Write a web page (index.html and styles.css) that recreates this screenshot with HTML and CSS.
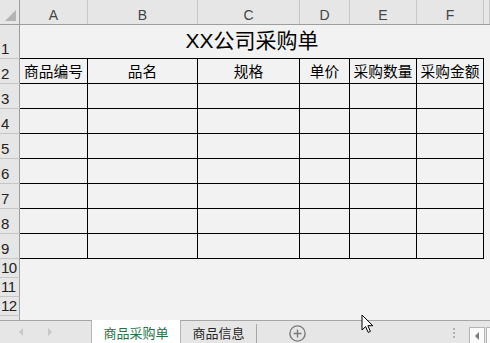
FILE: index.html
```html
<!DOCTYPE html>
<html lang="zh-CN">
<head>
  <meta charset="UTF-8" />
  <title>XX公司采购单</title>
  <link rel="stylesheet" href="styles.css">
</head>
<body>
  <div class="app">
    <div class="grid">
      <div class="row hdr">
        <div class="corner"><span class="tri"></span></div>
        <div class="col">A</div>
        <div class="col">B</div>
        <div class="col">C</div>
        <div class="col">D</div>
        <div class="col">E</div>
        <div class="col">F</div>
        <div class="col"></div>
      </div>

      <div class="row r-title">
        <div class="num">1</div>
        <div class="title">XX公司采购单</div>
        <div class="cell"></div>
      </div>

      <div class="row r-tbl">
        <div class="num">2</div>
        <div class="td th">商品编号</div>
        <div class="td th">品名</div>
        <div class="td th">规格</div>
        <div class="td th">单价</div>
        <div class="td th">采购数量</div>
        <div class="td th">采购金额</div>
        <div class="cell"></div>
      </div>
      <div class="row r-tbl"><div class="num">3</div><div class="td"></div><div class="td"></div><div class="td"></div><div class="td"></div><div class="td"></div><div class="td"></div><div class="cell"></div></div>
      <div class="row r-tbl"><div class="num">4</div><div class="td"></div><div class="td"></div><div class="td"></div><div class="td"></div><div class="td"></div><div class="td"></div><div class="cell"></div></div>
      <div class="row r-tbl"><div class="num">5</div><div class="td"></div><div class="td"></div><div class="td"></div><div class="td"></div><div class="td"></div><div class="td"></div><div class="cell"></div></div>
      <div class="row r-tbl"><div class="num">6</div><div class="td"></div><div class="td"></div><div class="td"></div><div class="td"></div><div class="td"></div><div class="td"></div><div class="cell"></div></div>
      <div class="row r-tbl"><div class="num">7</div><div class="td"></div><div class="td"></div><div class="td"></div><div class="td"></div><div class="td"></div><div class="td"></div><div class="cell"></div></div>
      <div class="row r-tbl"><div class="num">8</div><div class="td"></div><div class="td"></div><div class="td"></div><div class="td"></div><div class="td"></div><div class="td"></div><div class="cell"></div></div>
      <div class="row r-tbl"><div class="num">9</div><div class="td"></div><div class="td"></div><div class="td"></div><div class="td"></div><div class="td"></div><div class="td"></div><div class="cell"></div></div>

      <div class="row r-plain"><div class="num">10</div></div>
      <div class="row r-plain"><div class="num">11</div></div>
      <div class="row r-plain"><div class="num">12</div></div>
      <div class="row r-cut"><div class="num"></div></div>
    </div>

    <div class="tabbar">
      <div class="nav"><span class="arr left"></span><span class="arr right"></span></div>
      <div class="tab active">商品采购单</div>
      <div class="tab">商品信息</div>
      <span class="sep"></span>
      <div class="add">
        <svg width="17" height="17" viewBox="0 0 17 17" fill="none" stroke="#7a7a7a" stroke-width="1.4">
          <circle cx="8.5" cy="8.5" r="7.6"/><path d="M8.5 4.5v8M4.5 8.5h8"/>
        </svg>
      </div>
      <div class="spacer"></div>
      <div class="grip"><i></i><i></i><i></i></div>
      <div class="hscroll">
        <div class="sbtn"><span class="arr left dark"></span></div>
        <div class="sbtn"></div>
      </div>
    </div>

    <svg class="cursor" width="14" height="20" viewBox="0 0 14 20">
      <path d="M1 1 L1 16 L4.6 12.6 L7.2 18.4 L9.4 17.4 L6.9 11.7 L11.8 11.7 Z" fill="#fff" stroke="#000" stroke-width="1" stroke-linejoin="round"/>
    </svg>
  </div>
</body>
</html>
```

FILE: styles.css
```css
:root {
  --cols:20px 68px 110px 102px 50px 67px 67px 1fr;
  --head:#e6e6e6;--sheet:#f2f2f2;--hline:#c6c6c6;--hdark:#9e9e9e;
}
* {margin:0;padding:0;box-sizing:border-box}
body {
  background:var(--sheet);
  font-family:"Liberation Sans","Noto Sans CJK SC",sans-serif;color:#000;
}
.app {width:490px;height:343px;display:flex;flex-direction:column;overflow:hidden;position:relative}

.grid {height:320px;display:flex;flex-direction:column}
.row {display:grid;grid-template-columns:var(--cols)}

/* column header */
.hdr {height:25px;background:var(--head);border-bottom:1px solid var(--hdark)}
.corner {border-right:1px solid var(--hdark);display:flex;justify-content:flex-end;align-items:flex-end;padding:0 3px 3px 0}
.tri {width:11px;height:11px;background:#b4b4b4;clip-path:polygon(100% 0,100% 100%,0 100%)}
.col {
  border-right:1px solid var(--hline);font-size:14px;color:#444;
  display:flex;justify-content:center;align-items:flex-end;line-height:16px;padding-bottom:1px
}

/* row numbers */
.num {
  background:var(--head);border-right:1px solid var(--hdark);border-bottom:1px solid var(--hline);
  font-size:15px;color:#222;line-height:16px;padding:0 0 1px 1px;
  display:flex;align-items:flex-end;letter-spacing:-.5px;white-space:nowrap
}

.r-title {height:34px}
.title {
  grid-column:2 / 8;border-bottom:1px solid #000;font-size:21px;line-height:24px;
  display:flex;justify-content:center;align-items:flex-end;padding-bottom:5px
}
.r-tbl {height:25px}
.td {border-right:1px solid #000;border-bottom:1px solid #000}
.th {
  font-size:14.7px;line-height:18px;white-space:nowrap;
  display:flex;justify-content:center;align-items:flex-end;padding-bottom:2px
}
.r-plain {height:19px}
.r-cut {height:4px}
.r-cut .num {border-bottom:none}

/* sheet tabs */
.tabbar {
  height:23px;display:flex;align-items:stretch;background:var(--head);
  border-top:1px solid #a6a6a6;font-family:"Noto Sans CJK SC",sans-serif;
}
.nav {width:92px;border-right:1px solid #b4b4b4;display:flex;align-items:center;padding-left:19px;gap:25px}
.arr {width:0;height:0;border-top:4px solid transparent;border-bottom:4px solid transparent}
.arr.left {border-right:4px solid #c8c8c8}
.arr.right {border-left:4px solid #c8c8c8}
.arr.left.dark {border-right-color:#7a7a7a}
.tab {
  font-size:13px;line-height:16px;display:flex;align-items:center;justify-content:center;
  border-right:1px solid #b4b4b4;color:#262626;padding-top:2px
}
.tab.active {width:89px;background:#fff;color:#217346;margin-top:-1px;padding-top:3px}
.tab:not(.active) {width:75px;border-right:none}
.sep {width:1px;background:#a6a6a6;margin-top:3px}
.add {display:flex;align-items:center;padding:3px 0 0 32px}
.spacer {flex:1}
.grip {display:flex;flex-direction:column;justify-content:center;gap:2px;padding-top:2px;margin-right:14px}
.grip i {display:block;width:2px;height:2px;background:#b0b0b0}
.hscroll {width:21px;display:flex;gap:1px;padding-top:6px}
.sbtn {
  width:16px;flex-shrink:0;background:#fafafa;border:1px solid #b4b4b4;border-bottom:none;
  display:flex;align-items:center;justify-content:center
}

.cursor {position:absolute;left:361px;top:314px}
```
